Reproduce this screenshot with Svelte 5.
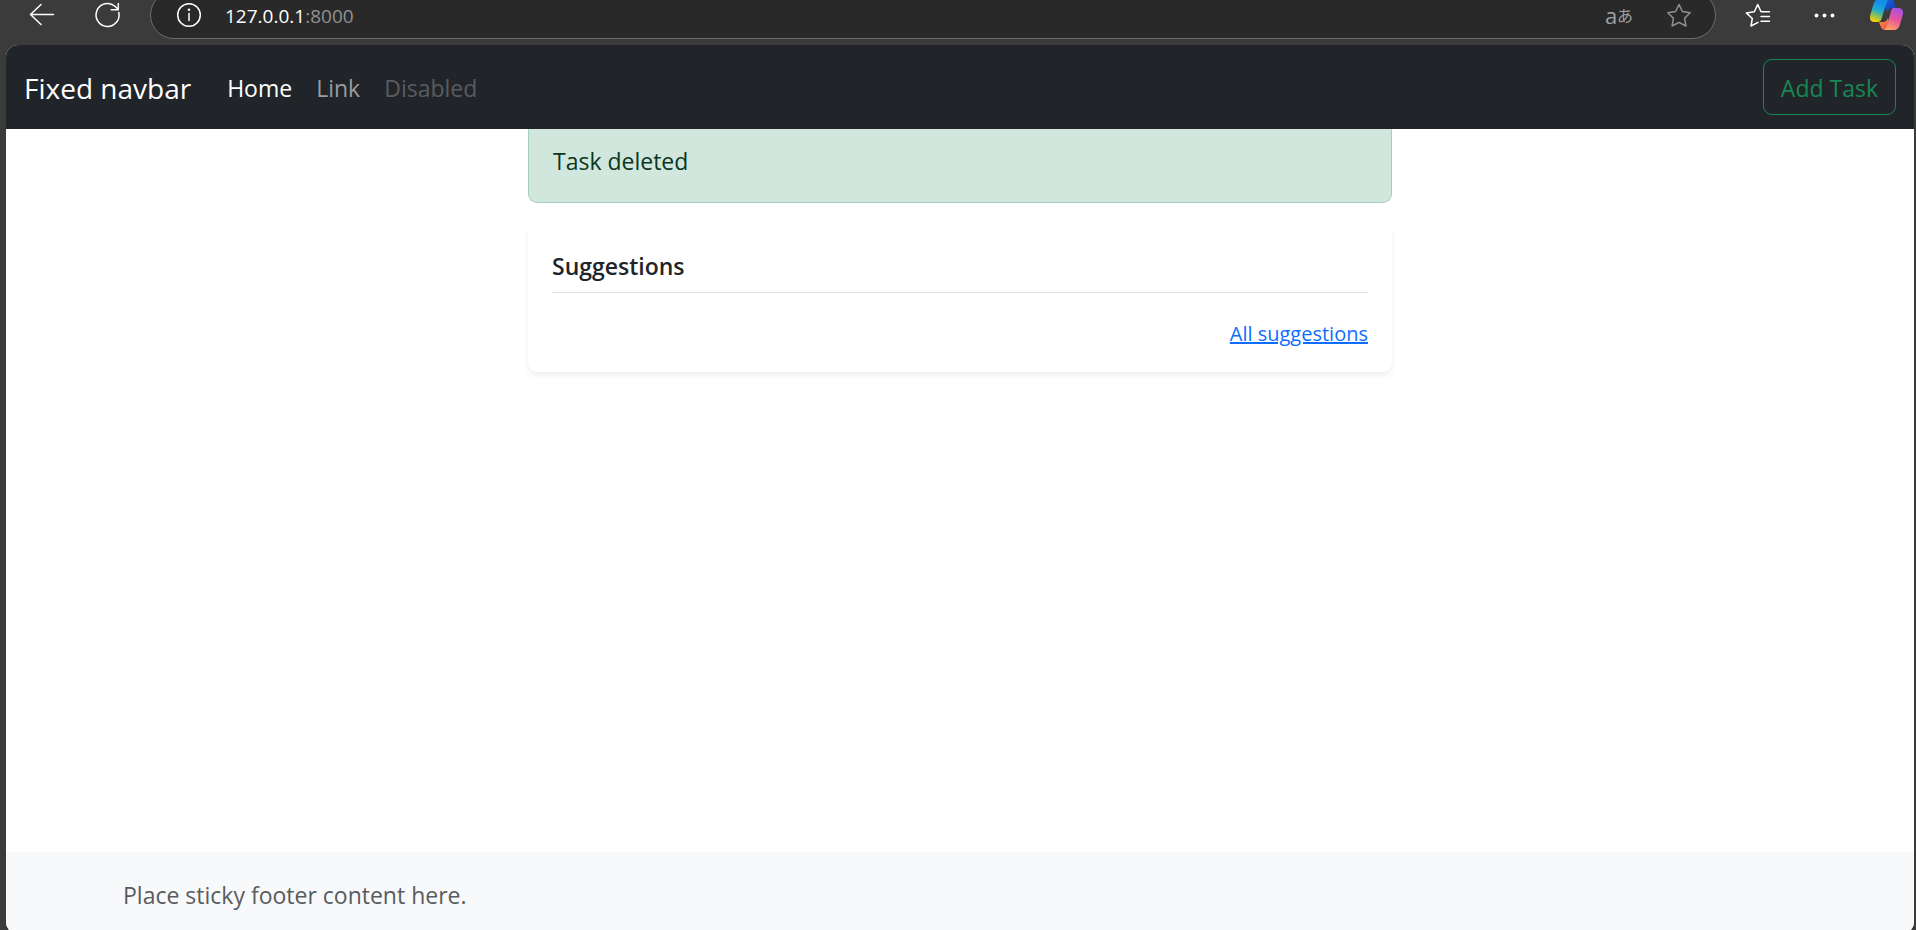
<script>
  const links = [
    { label: 'Home', state: 'active' },
    { label: 'Link', state: '' },
    { label: 'Disabled', state: 'disabled' }
  ];
</script>

<div class="browser">
  <header class="toolbar">
    <div class="history">
      <button class="tool" aria-label="Back">
        <svg width="36" height="36" viewBox="0 0 36 36"><path d="M29.500 16.500H6.500M17 6.500 6.500 16.500l10.500 10" /></svg>
      </button>
      <button class="tool" aria-label="Refresh">
        <svg width="36" height="36" viewBox="0 0 36 36"><path d="M29.800 14.500A11.500 11.500 0 1 1 26 8.200l3 3M29.300 5.500v6.300h-7" /></svg>
      </button>
    </div>
    <div class="address">
      <button class="tool" aria-label="Site information">
        <svg width="36" height="36" viewBox="0 0 36 36"><circle cx="18" cy="18" r="11.300" /><path d="M18 16.500v7" /><circle class="dot" cx="18" cy="12.800" r="1.300" /></svg>
      </button>
      <span class="url">127.0.0.1<span class="port">:8000</span></span>
      <button class="tool translate" aria-label="Translate">a<span>あ</span></button>
      <button class="tool muted" aria-label="Add to favorites">
        <svg width="36" height="36" viewBox="0 0 36 36"><path d="m18 7.500 3.400 7 7.800 1.200-5.600 5.500 1.300 7.800-6.900-3.600-6.900 3.600 1.300-7.800-5.600-5.500 7.800-1.200z" /></svg>
      </button>
    </div>
    <div class="tools">
      <button class="tool" aria-label="Favorites">
        <svg width="36" height="36" viewBox="0 0 36 36"><path d="M18 24.300 11 28l1.300-7.500-6-5.600 8-1.200L17.700 6.500l3.400 7.200H29.500M21 18.500H29.500M21 23.300H29.500" /></svg>
      </button>
      <button class="tool" aria-label="Settings and more">
        <svg width="36" height="36" viewBox="0 0 36 36"><g class="dot"><circle cx="11.500" cy="17.500" r="1.900" /><circle cx="19.500" cy="17.500" r="1.900" /><circle cx="27.500" cy="17.500" r="1.900" /></g></svg>
      </button>
      <button class="tool" aria-label="Copilot">
        <svg class="copilot" width="36" height="36" viewBox="1 1 36 36">
          <defs>
            <linearGradient id="cool" x1="0.600" y1="0" x2="0.300" y2="1">
              <stop offset="0.200" stop-color="#168fe8" /><stop offset="0.500" stop-color="#20acd0" /><stop offset="0.720" stop-color="#7cc060" /><stop offset="1" stop-color="#ffd000" />
            </linearGradient>
            <linearGradient id="warm" x1="0.700" y1="0" x2="0.300" y2="1">
              <stop offset="0" stop-color="#a650e0" /><stop offset="0.500" stop-color="#e9559a" /><stop offset="1" stop-color="#ffa25e" />
            </linearGradient>
            <linearGradient id="deep" x1="0" y1="0" x2="1" y2="1">
              <stop offset="0" stop-color="#1268dc" /><stop offset="1" stop-color="#173bb6" />
            </linearGradient>
            <linearGradient id="ember" x1="0" y1="0" x2="1" y2="1">
              <stop offset="0" stop-color="#ff9a30" /><stop offset="1" stop-color="#ec4060" />
            </linearGradient>
          </defs>
          <path fill="url(#deep)" d="M13 2h8c2.500 0 3.700 1 4.400 3.200l1.700 5.800h-3.600c-3 0-4.400 1.800-5.200 4.200z" />
          <path fill="url(#ember)" d="M22 33h-6c-2.300 0-3.600-1.200-4.300-3.400L10 25h4.300c2.500 0 3.700-1.500 4.500-4z" />
          <path fill="url(#cool)" d="M10.500 2H20c-1.300.800-2 2.200-2.600 4.200l-4.700 15c-.800 2.600-1.700 3.800-4.200 3.800H5.200C1.500 25 .300 22 1.300 18L4.200 8c1.200-4 2.800-6 6.300-6z" />
          <path fill="url(#warm)" d="M24 11h5.500c3.900 0 5.300 3 4.300 7l-2.700 9c-1.200 4-2.900 6-6.600 6H15c1.500-.700 2.300-2.200 2.900-4.200l4-14.300c.5-1.900.9-2.900 2.100-3.500z" />
        </svg>
      </button>
    </div>
  </header>

  <div class="page">
    <nav class="navbar">
      <a class="brand" href="#top">Fixed navbar</a>
      <ul>
        {#each links as link}
          <li><a class={link.state} href={link.state === 'disabled' ? undefined : '#top'}>{link.label}</a></li>
        {/each}
      </ul>
      <button class="add">Add Task</button>
    </nav>

    <main>
      <div class="alert" role="alert">Task deleted</div>
      <section class="card">
        <h6>Suggestions</h6>
        <div class="more"><a href="#suggestions">All suggestions</a></div>
      </section>
    </main>

    <footer><span>Place sticky footer content here.</span></footer>
  </div>
</div>

<style>
  :global(body) {
    margin: 0;
  }
  .browser {
    box-sizing: border-box;
    height: 100vh;
    overflow: hidden;
    display: flex;
    flex-direction: column;
    background: #3b3b3b;
    font-family: "Segoe UI", "Open Sans", "Noto Sans", sans-serif;
    font-size: 23px;
    line-height: 36px;
    color: #212529;
  }
  button {
    font: inherit;
    cursor: pointer;
  }
  a {
    text-decoration: none;
  }

  .toolbar {
    flex: none;
    height: 39px;
    padding: 0 10px 6px 24px;
    display: flex;
    align-items: flex-end;
    color: #fff;
  }
  .history,
  .tools {
    display: flex;
    gap: 29px;
    margin-right: 25px;
    padding-bottom: 5px;
  }
  .tools {
    margin: 0 0 0 24px;
  }
  .tool {
    flex: none;
    width: 36px;
    height: 36px;
    padding: 0;
    border: 0;
    background: none;
    color: inherit;
  }
  .tool svg {
    display: block;
    fill: none;
    stroke: currentColor;
    stroke-width: 1.5;
    stroke-linecap: round;
    stroke-linejoin: round;
  }
  .tool .dot {
    fill: currentColor;
    stroke: none;
  }
  .tool .copilot {
    stroke: none;
  }
  .address {
    flex: 1;
    box-sizing: border-box;
    height: 48px;
    padding: 0 18px 0 20px;
    border: 1px solid #6c6c6c;
    border-radius: 24px;
    background: #292929;
    display: flex;
    align-items: center;
  }
  .url {
    flex: 1;
    margin-left: 18px;
    padding-top: 2px;
    font-size: 19px;
  }
  .port {
    color: #919191;
  }
  .tool.translate {
    display: flex;
    align-items: center;
    justify-content: center;
    margin-right: 24px;
    color: #a0a0a0;
    font-size: 22px;
    white-space: nowrap;
  }
  .translate span {
    font-family: "Noto Sans CJK JP", sans-serif;
    font-size: 16px;
  }
  .tool.muted {
    color: #919191;
  }

  .page {
    flex: 1;
    margin: 0 2px -4px 6px;
    border-radius: 12px;
    overflow: hidden;
    display: flex;
    flex-direction: column;
    background: #fff;
  }
  .navbar {
    display: flex;
    align-items: center;
    padding: 14px 18px;
    background: #212529;
  }
  .brand {
    margin-right: 24px;
    padding-top: 2px;
    color: #fff;
    font-size: 28px;
  }
  ul {
    flex: 1;
    display: flex;
    margin: 0;
    padding: 2px 0 0;
    list-style: none;
  }
  li a {
    padding: 0 12px;
    color: #9b9d9f;
  }
  li .active {
    color: #fff;
  }
  li .disabled {
    color: #595c5f;
  }
  .add {
    padding: 10px 17px 8px;
    border: 1px solid #198754;
    border-radius: 9px;
    background: none;
    color: #198754;
  }

  main {
    flex: 1;
    box-sizing: border-box;
    width: 100%;
    max-width: 864px;
    margin: 0 auto;
  }
  .alert {
    padding: 14px 24px 23px;
    border: 1px solid #a3cfbb;
    border-top: 0;
    border-radius: 0 0 9px 9px;
    background: #d1e7dd;
    color: #0a3622;
  }
  .card {
    margin-top: 24px;
    padding: 25px 24px 22px;
    border-radius: 9px;
    background: #fff;
    box-shadow: 0 3px 6px rgba(0, 0, 0, 0.075);
  }
  h6 {
    margin: 0;
    padding-bottom: 11px;
    border-bottom: 1px solid #dee2e6;
    font-size: 23px;
    line-height: 29px;
    font-weight: 600;
  }
  .more {
    padding-top: 25px;
    font-size: 20px;
    line-height: 32px;
    text-align: right;
  }
  .more a {
    color: #0d6efd;
    text-decoration: underline;
    text-decoration-thickness: 2px;
  }

  footer {
    padding: 25px 117px 21px;
    background: #f8f9fa;
    color: #595c5f;
  }
</style>
